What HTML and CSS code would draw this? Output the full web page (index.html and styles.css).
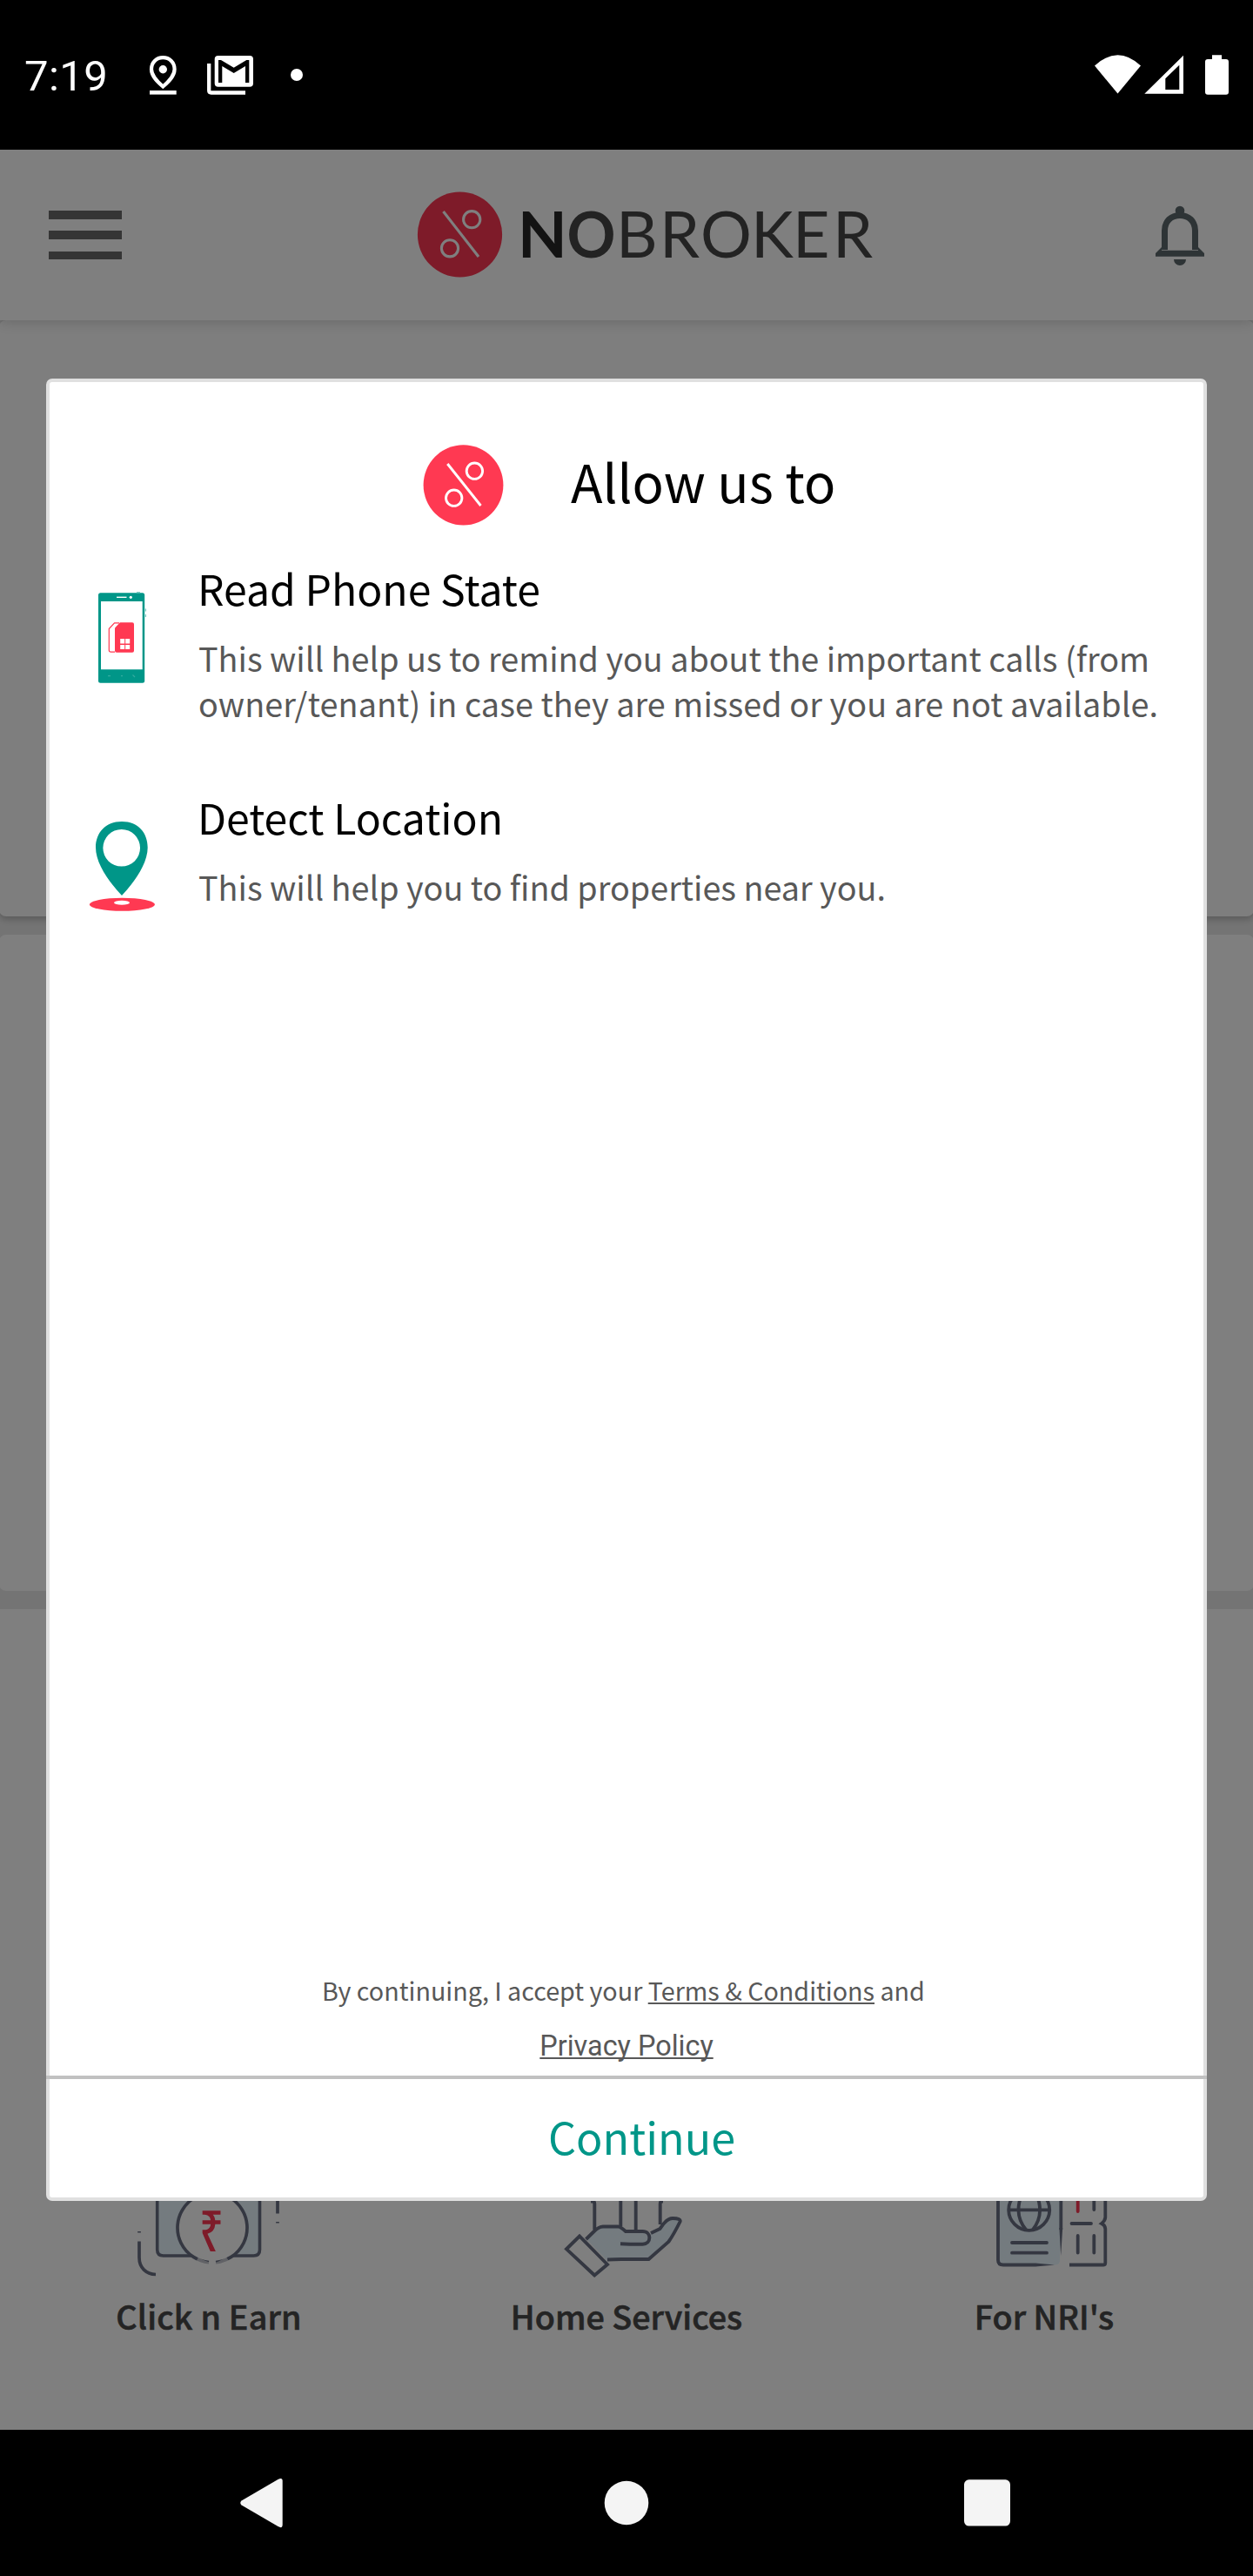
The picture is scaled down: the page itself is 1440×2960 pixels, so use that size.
FILE: index.html
```html
<!DOCTYPE html>
<html lang="en">
<head>
<meta charset="utf-8">
<title>NoBroker</title>
<link rel="stylesheet" href="styles.css">
</head>
<body>
<div class="status-bar">
  <span class="clock">7:19</span>
  <svg class="st-pin" viewBox="168 62 40 48"><path d="M187.3 66.2C179.600 66.200 174 72 174 79.500C174 87.500 181 94 187.300 99.500C193.600 94 200.600 87.500 200.600 79.500C200.600 72 195 66.200 187.300 66.200Z" fill="none" stroke="#fff" stroke-width="4.200"/><circle cx="187.300" cy="79.700" r="4.700" fill="#fff"/><path d="M172 104h30.700v4.600H172z" fill="#fff"/></svg>
  <svg class="st-mail" viewBox="236 62 56 48"><rect x="246.700" y="64" width="44.300" height="35.700" rx="4" fill="#fff"/><path d="M251 69h3l14.700 8.700L283.300 69h3v26H282V76l-13.300 8-13.400-8v19H251z" fill="#000"/><path d="M240.200 73v31q0 2.500 2.500 2.500H282" fill="none" stroke="#fff" stroke-width="4.300"/></svg>
  <span class="st-dot"></span>
  <svg class="st-wifi" viewBox="1258 62 53 48"><path d="M1258 75.500Q1284.500 51 1311 75.500L1284.500 107.500z" fill="#fff"/></svg>
  <svg class="st-signal" viewBox="1315 62 45 48"><path fill-rule="evenodd" d="M1315.300 107.700L1360 63.700v44zM1339.300 90.300V103h16V74.700z" fill="#fff"/></svg>
  <svg class="st-battery" viewBox="1385 62 27 48"><path d="M1393 63.300h11V68h5q3 0 3 3v34.700q0 3-3 3h-21q-3 0-3-3V71q0-3 3-3h5z" fill="#fff"/></svg>
</div>

<div class="app">
  <header class="app-header">
    <div class="menu"><i></i><i></i><i></i></div>
    <svg class="brand" viewBox="480 214 526 112">
      <ellipse cx="528.500" cy="269.500" rx="48.600" ry="48.900" fill="#fc3652"/>
      <g fill="none" stroke="#fff" stroke-width="3.100"><path d="M509.500 243L550 295"/><circle cx="542.200" cy="252.200" r="9.600"/><circle cx="517" cy="285.300" r="9.600"/></g>
      <g font-family="Lato, sans-serif" font-size="73.600"><text x="595" y="296" font-weight="700" fill="#262626">N</text><text x="651.500" y="296" font-weight="700" fill="#464646" textLength="56" lengthAdjust="spacingAndGlyphs">O</text><text x="708 758 805 863 911 957" y="296" fill="#464646">BROKER</text></g>
    </svg>
    <svg class="bell" viewBox="1328 234 56 72" fill="#5c686c"><circle cx="1356" cy="242" r="5.300"/><path d="M1338.500 287V265C1338.500 254 1346 247.500 1356 247.500S1373.500 254 1373.500 265V287" fill="none" stroke="#5c686c" stroke-width="7"/><path d="M1335 284l-7 7v3.700h56V291l-7-7v3.700h-42zM1349 298h14a7 7 0 0 1-14 0z"/></svg>
  </header>
  <section class="card card-hero"></section>
  <section class="card card-mid"></section>
  <section class="card-services">
    <div class="service">
      <svg viewBox="160 2480 160 156">
        <path d="M180.700 2500V2585q0 7 7 7H291.500q7 0 7-7V2500" fill="#e8f6ff" stroke="#686e82" stroke-width="3.600"/>
        <circle cx="244" cy="2560" r="41" fill="#fff"/>
        <path d="M240 2599.600A40 40 0 1 1 248 2599.600" fill="none" stroke="#686e82" stroke-width="3.700"/>
        <path d="M228 2593.500q8 5.500 15 6.300v4h-20zM260 2593.500q-8 5.500-13 6.300v4h20z" fill="#fff" opacity=".6"/>
        <path d="M160 2575.500V2594C160 2606 168 2613 179 2613.500M160 2564v1.600M319 2500v43.500M319 2553v1.600" fill="none" stroke="#686e82" stroke-width="3.700"/>
        <text x="229" y="2587" class="rupee" textLength="28" lengthAdjust="spacingAndGlyphs">₹</text>
      </svg>
      <span class="label label-wide">Click n Earn</span>
    </div>
    <div class="service">
      <svg viewBox="640 2480 160 156" fill="none" stroke="#686e82" stroke-width="3.900">
        <path d="M674 2573L682.700 2564Q688 2558.700 693 2558.500H710.500Q713 2558.500 720 2564H740Q747 2565 747.500 2566.700L760 2560Q767 2549 773 2549Q783 2549 781.700 2552.700Q774 2570 768.300 2576L745 2596H716.700L697 2596.700Z" fill="#e8f6ff" stroke="none"/>
        <path d="M679 2529.500h2q2.300 0 2.300 3V2562M713.300 2500v58M730.700 2500v62M762 2529.500h-1q-2.300 0-2.300 3V2556"/>
        <path d="M673.500 2573L682.700 2564Q688 2558.700 693 2558.500H710.500Q713 2558.500 719 2564H738.500C749 2564 749 2578.500 738.500 2578.700H724L713 2578.300M748 2566L758.500 2561Q766 2549 773 2549Q783 2549 781.500 2553Q774 2568 768.300 2576L745.500 2596H714L698 2596.500"/>
        <path d="M683.300 2614.500L651 2584.300L666 2569.500L698 2602Z"/>
      </svg>
      <span class="label">Home Services</span>
    </div>
    <div class="service">
      <svg viewBox="1120 2480 160 156" fill="none" stroke="#686e82" stroke-width="3.800">
        <path d="M1147 2500V2597Q1147 2602.500 1153 2602.500H1213Q1218 2602 1218 2597L1219.300 2560V2500Z" fill="#e8f6ff" stroke="none"/>
        <path d="M1147 2500V2597Q1147 2602.500 1153 2602.500H1190M1219.300 2500V2562"/>
        <path d="M1190 2600.600L1212 2602.500L1190 2604.400zM1217.400 2560h3.800l-2 32z" fill="#686e82" stroke="none"/>
        <circle cx="1182.700" cy="2539.300" r="23.500"/>
        <path d="M1161 2539.300H1205M1174 2522Q1165 2545 1179 2562M1191.500 2522Q1200.500 2545 1187 2562"/>
        <path stroke-linecap="round" d="M1163 2577H1203M1163 2588.700H1203M1257.300 2500V2539M1231.500 2555H1254M1238.700 2569V2588.500M1257.300 2569V2588.500"/>
        <path d="M1270.300 2500V2548Q1270 2552 1266 2555Q1270 2557 1270.300 2561V2600.500Q1270.300 2602.500 1268 2602.500H1229"/>
        <path d="M1238.700 2500V2541" stroke="#fc3652" stroke-linecap="round"/>
      </svg>
      <span class="label">For NRI's</span>
    </div>
  </section>

  <div class="overlay">
    <div class="dialog">
      <div class="dialog-title">
        <svg viewBox="486 511 93 93"><ellipse cx="532.500" cy="557.300" rx="45.900" ry="46.100" fill="#ff3952"/><g fill="none" stroke="#fff" stroke-width="2.900"><path d="M514.300 533L552.500 581"/><circle cx="545.400" cy="541.200" r="9.200"/><circle cx="521.700" cy="572.200" r="9.200"/></g></svg>
        <h1>Allow us to</h1>
      </div>
      <div class="permission">
        <svg viewBox="97 675 86 120">
          <rect x="113" y="681.300" width="53.200" height="103.400" rx="2.500" fill="#009688"/>
          <path d="M116 691h47.700v78.300H116z" fill="#fff"/>
          <path d="M134 686.300h11.500" stroke="#fff" stroke-width="1.400"/><circle cx="150.300" cy="686.300" r="1.600" fill="#fff"/>
          <path d="M167.400 699.500v3M167.400 706v3M157 680.700h4" stroke="#7ccac3" stroke-width="1.300"/>
          <path d="M124 776.700h3M139 776.700h2M152.500 775.500l2.500 2.500" stroke="#33aba0" stroke-width="1.200"/>
          <path d="M132 721.500L138 715.300H152q2 0 2 2V747.700q0 2-2 2H134q-2 0-2-2z" fill="#ff3952"/>
          <path d="M137 715.900h-5.500L125.300 722.500V747q0 2.200 2.200 2.200H132" fill="none" stroke="#ff3952" stroke-width="1.200"/>
          <path d="M138.200 734h5v5.500h-5zM144.200 734h5v5.500h-5zM138.200 741h5v5h-5zM144.200 741h5v5h-5z" fill="#fff"/>
        </svg>
        <div>
          <h2>Read Phone State</h2>
          <p>This will help us to remind you about the important calls (from<br><span class="spaced">owner/tenant) in case they are missed or you are not available.</span></p>
        </div>
      </div>
      <div class="permission">
        <svg viewBox="97 938 86 120">
          <path fill-rule="evenodd" d="M140 944C121 944 110 957 110 974C110 992 125 1013 140 1029C155 1013 169.700 992 169.700 974C169.700 957 159 944 140 944ZM139.700 953a21.300 21.300 0 1 1 0 42.600a21.300 21.300 0 1 1 0-42.600z" fill="#009688"/>
          <ellipse cx="140.400" cy="1039.300" rx="37.600" ry="7.500" fill="#ff3952"/><ellipse cx="140" cy="1037.300" rx="9" ry="2.500" fill="#fff"/>
        </svg>
        <div>
          <h2>Detect Location</h2>
          <p>This will help you to find properties near you.</p>
        </div>
      </div>
      <div class="legal">
        <div class="terms">By continuing, I accept your <a>Terms &amp; Conditions</a> and</div>
        <div class="privacy"><a>Privacy Policy</a></div>
      </div>
      <div class="action">Continue</div>
    </div>
  </div>
</div>

<nav class="nav-bar">
  <svg viewBox="270 2846 60 60"><path d="M277.500 2873.500L319.500 2849Q324.700 2846 324.700 2851V2901Q324.700 2906 319.500 2903L277.500 2878.500Q275 2876 277.500 2873.500z" fill="#f4f4f4"/></svg>
  <svg viewBox="690 2846 60 60"><circle cx="720" cy="2876" r="25.300" fill="#f4f4f4"/></svg>
  <svg viewBox="1110 2846 60 60"><rect x="1108" y="2849.300" width="53" height="53.300" rx="5.500" fill="#f4f4f4"/></svg>
</nav>
</body>
</html>
```
FILE: styles.css
```css
* { box-sizing: border-box; margin: 0; padding: 0; }
body { width: 1440px; height: 2960px; display: flex; flex-direction: column; background: #000; font-family: "Noto Sans CJK JP", "Noto Sans", sans-serif; overflow: hidden; }
svg { display: block; flex: none; overflow: visible; }

.status-bar { flex: none; height: 172px; padding: 0 28px; display: flex; align-items: center; }
.status-bar svg { height: 48px; }
.clock { width: 140px; padding-top: 4px; color: #fff; font: 400 49px/60px Roboto, sans-serif; letter-spacing: .4px; }
.st-pin { width: 40px; }
.st-mail { width: 56px; margin-left: 28px; }
.st-dot { width: 14px; height: 14px; margin-left: 42px; border-radius: 50%; background: #fff; }
.st-wifi { width: 53px; margin-left: auto; }
.st-signal { width: 45px; margin-left: 4px; }
.st-battery { width: 27px; margin-left: 25px; }

.app { position: relative; flex: none; height: 2620px; display: flex; flex-direction: column; background: #e9e9e9; overflow: hidden; }
.app-header { position: relative; z-index: 1; flex: none; height: 196px; padding: 0 56px; display: flex; align-items: center; background: #fff; box-shadow: 0 2px 14px rgba(0, 0, 0, .16); }
.menu { width: 84px; height: 56px; display: flex; flex-direction: column; justify-content: space-between; }
.menu i { height: 9.5px; background: #6a6a6a; }
.brand { width: 526px; height: 112px; margin-left: 340px; }
.bell { width: 56px; height: 72px; margin-left: auto; }

.card { flex: none; margin: 0 -1px; border-radius: 8px; }
.card-hero { height: 685px; background: #fcfcfc; box-shadow: 0 3px 8px rgba(0, 0, 0, .25); }
.card-mid { height: 754px; margin-top: 21px; background: #fefefe; }
.card-services { flex: 1; margin-top: 21px; padding-bottom: 107px; display: grid; grid-template-columns: repeat(3, 1fr); align-items: end; background: #fff; }
.service { display: flex; flex-direction: column; align-items: center; }
.service svg { width: 160px; height: 156px; }
.label { font-size: 37.7px; font-weight: 500; line-height: 49px; color: #484848; white-space: nowrap; -webkit-text-stroke: .6px #484848; }
.label-wide { letter-spacing: .2px; }
.rupee { font: 500 66px "Noto Sans", sans-serif; fill: #fc3652; }

.overlay { position: absolute; z-index: 2; inset: 0; background: rgba(0, 0, 0, .5); padding: 263px 53px; }
.dialog { height: 2094px; border: 4px solid #e0e0e0; border-radius: 7px; background: #fff; display: flex; flex-direction: column; }
.dialog-title { display: flex; align-items: flex-start; gap: 77px; height: 164px; padding: 72px 0 0 429px; }
.dialog-title svg { width: 93px; height: 93px; }
.dialog-title h1 { margin-top: 5px; font-size: 60px; font-weight: 400; line-height: 72px; color: #000; white-space: nowrap; }
.permission { display: grid; grid-template-columns: 130px 1fr; margin-top: 36px; padding-left: 40px; }
.permission + .permission { margin-top: 68px; }
.permission svg { width: 86px; height: 120px; margin-top: 36px; }
.permission h2 { font-size: 48.1px; font-weight: 400; line-height: 72px; color: #000; }
.permission p { margin: 19px 0 0 1px; font-size: 37.75px; line-height: 52px; color: #585858; white-space: nowrap; }
.spaced { letter-spacing: .08px; }
.legal { margin-top: auto; display: flex; flex-direction: column; gap: 24px; text-align: center; color: #585858; line-height: 40px; padding-bottom: 14px; }
.legal a { text-decoration: underline; text-decoration-thickness: 2px; text-underline-offset: 2px; text-decoration-skip-ink: none; }
.terms { padding-right: 7px; font-size: 28.7px; }
.privacy { font-family: Roboto, sans-serif; font-size: 32.4px; }
.action { height: 140px; margin: 0 -4px; padding: 0 0 6px 35px; border-top: 4px solid #c1c1c1; text-align: center; font-size: 50.3px; line-height: 130px; color: #009688; }

.nav-bar { flex: 1; padding: 0 270px; display: flex; align-items: center; justify-content: space-between; }
.nav-bar svg { width: 60px; height: 60px; }
```
